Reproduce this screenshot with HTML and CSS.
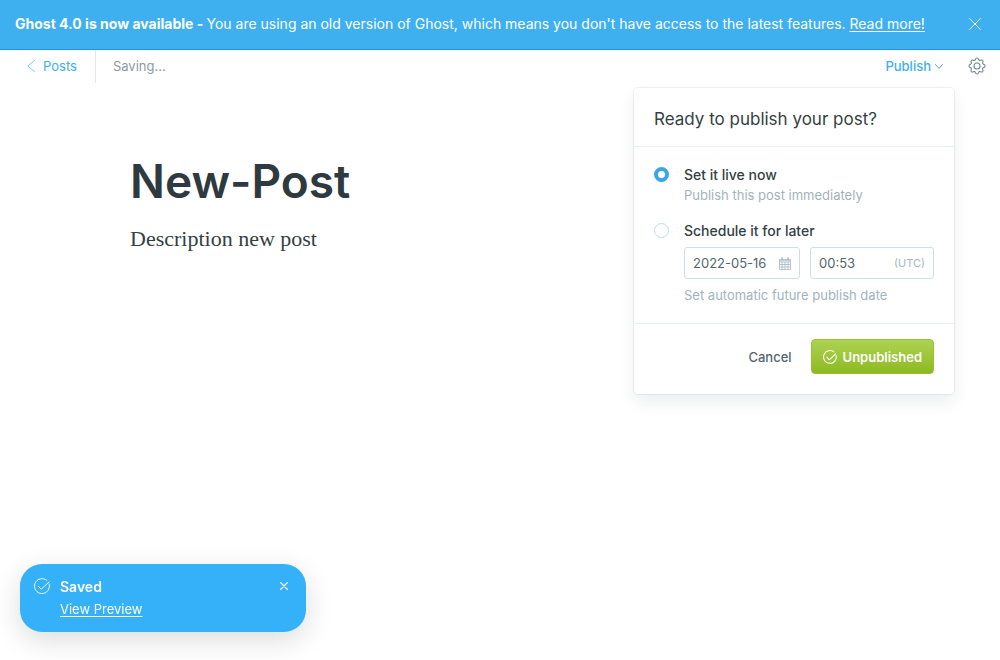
FILE: index.html
```html
<!DOCTYPE html>
<html lang="en">
<head>
<meta charset="utf-8">
<meta name="viewport" content="width=device-width, initial-scale=1">
<title>New-Post - Ghost</title>
<link rel="stylesheet" href="styles.css">
</head>
<body>
<div class="app">
  <aside class="upgrade">
    <p class="upgrade-text"><strong>Ghost 4.0 is now available - </strong>You are using an old version of Ghost, which means you don't have access to the latest features. <a class="upgrade-link" href="#">Read more!</a></p>
    <button class="icon-button" type="button" aria-label="Close">
      <svg width="12" height="12" viewBox="0 0 12 12" fill="none" stroke="currentColor" stroke-linecap="round"><path d="M.5.5l11 11M11.5.5l-11 11"/></svg>
    </button>
  </aside>

  <header class="toolbar">
    <a class="back" href="#">
      <svg width="8" height="12" viewBox="0 0 8 12" fill="none" stroke="currentColor" stroke-width=".7" stroke-linecap="round"><path d="M7.5.5L.8 6l6.7 5.5"/></svg>
      Posts
    </a>
    <span class="status">Saving...</span>
    <div class="publish">
      <button class="publish-trigger" type="button" aria-expanded="true">Publish
        <svg width="8" height="5" viewBox="0 0 8 5" fill="none" stroke="#5d8ca5" stroke-width=".9" stroke-linecap="round"><path d="M.5.5L4 4.4 7.500.5"/></svg>
      </button>
      <form class="menu">
        <h2 class="menu-title">Ready to publish your post?</h2>
        <div class="menu-body">
          <div class="option">
            <input class="radio" type="radio" name="when" id="now" checked>
            <div class="option-content">
              <label class="option-label" for="now">Set it live now</label>
              <p class="hint">Publish this post immediately</p>
            </div>
          </div>
          <div class="option">
            <input class="radio" type="radio" name="when" id="later">
            <div class="option-content">
              <label class="option-label" for="later">Schedule it for later</label>
              <div class="schedule">
                <div class="field field-date">
                  <input class="field-input" type="text" value="2022-05-16" aria-label="Date">
                  <svg class="calendar" width="12" height="13" viewBox="0 0 12 13" fill="none" stroke="currentColor" stroke-width=".8"><path d="M.5 2.500h11v10H.5zM.5 5h11M.5 7.500h11M.5 10h11M3 5v7.500M6 5v7.500M9 5v7.500M.5 3.700h11"/><path stroke-width="1.400" d="M3 .3v2.900M9 .3v2.900"/></svg>
                </div>
                <div class="field field-time">
                  <input class="field-input" type="text" value="00:53" aria-label="Time">
                  <span class="zone">(UTC)</span>
                </div>
              </div>
              <p class="hint">Set automatic future publish date</p>
            </div>
          </div>
        </div>
        <div class="menu-footer">
          <button class="cancel" type="button">Cancel</button>
          <button class="submit" type="button">
            <svg width="14" height="14" viewBox="0 0 16 16" fill="none" stroke="currentColor" stroke-width="1.200" stroke-linecap="round" stroke-linejoin="round"><path d="M15 6.200a7.300 7.300 0 1 1-2.600-4"/><path d="M4.300 8.200l3 3L14.300 4.300"/></svg>
            Unpublished
          </button>
        </div>
      </form>
    </div>
    <button class="icon-button settings" type="button" aria-label="Settings">
      <svg width="18" height="18" viewBox="0 0 18 18" fill="none" stroke="currentColor" stroke-width="1.100" stroke-linejoin="round"><path d="M7.400 2.300Q7.700 1 9 1T10.600 2.300Q11.200 4 12.600 3.300Q14 2.600 14.700 3.300T14.700 5.400Q14 6.800 15.700 7.400Q17 7.700 17 9T15.700 10.600Q14 11.200 14.700 12.600Q15.400 14 14.700 14.700T12.600 14.700Q11.200 14 10.600 15.700Q10.300 17 9 17T7.400 15.700Q6.800 14 5.400 14.700Q4 15.400 3.300 14.700T3.300 12.600Q4 11.200 2.300 10.600Q1 10.300 1 9T2.300 7.400Q4 6.800 3.300 5.400Q2.600 4 3.300 3.300T5.400 3.300Q6.800 4 7.400 2.300Z"/><circle cx="9" cy="9" r="3"/></svg>
    </button>
  </header>

  <main class="editor">
    <h1 class="post-title">New-Post</h1>
    <p class="post-text">Description new post</p>
  </main>

  <div class="toast" role="status">
    <svg class="toast-icon" width="16" height="16" viewBox="0 0 16 16" fill="none" stroke="currentColor" stroke-width=".9" stroke-linecap="round" stroke-linejoin="round"><path d="M15.200 6a7.500 7.500 0 1 1-2.400-3.700"/><path d="M4.300 8.200l3 3L15 4"/></svg>
    <div class="toast-content">
      <strong class="toast-title">Saved</strong>
      <a class="toast-link" href="#">View Preview</a>
    </div>
    <button class="icon-button toast-close" type="button" aria-label="Dismiss">
      <svg width="8" height="8" viewBox="0 0 8 8" fill="none" stroke="currentColor" stroke-width="1.200" stroke-linecap="round"><path d="M.5.5l7 7M7.500.5l-7 7"/></svg>
    </button>
  </div>
</div>
</body>
</html>
```

FILE: styles.css
```css
* {
  box-sizing: border-box;
}

body,
h1,
h2,
p {
  margin: 0;
}

body {
  background: #fff;
  color: #343f44;
  font: 13px/20px Inter, "Open Sans", sans-serif;
}

button,
input {
  font: inherit;
  color: inherit;
}

button {
  padding: 0;
  border: 0;
  background: none;
  cursor: pointer;
}

svg {
  display: block;
  flex: none;
}

.app {
  min-height: 100vh;
}

.upgrade {
  display: flex;
  align-items: center;
  justify-content: space-between;
  gap: 16px;
  min-height: 50px;
  padding: 0 19px 1px 15px;
  border-bottom: 1px solid #1e96de;
  background: #3eb0ef;
  color: #fff;
  font-size: 14px;
}

.upgrade-text strong {
  font-weight: 700;
}

.upgrade-link {
  color: inherit;
  text-underline-offset: 2px;
}

.icon-button {
  display: flex;
}

.toolbar {
  display: flex;
  align-items: center;
  height: 33px;
  padding: 0 14px 0 0;
}

.back {
  display: flex;
  align-items: center;
  align-self: stretch;
  gap: 8px;
  padding: 0 18px 1px 27px;
  border-right: 1px solid #dfe8ef;
  color: #3eb0ef;
  text-decoration: none;
}

.status {
  padding: 0 0 2px 17px;
  color: #8b9ba5;
}

.publish {
  position: relative;
  margin-left: auto;
  padding-bottom: 1px;
}

.publish-trigger {
  display: flex;
  align-items: center;
  gap: 4px;
  color: #3eb0ef;
  font-weight: 500;
}

.settings {
  margin-left: 25px;
  padding-bottom: 2px;
  color: #738a94;
}

.menu {
  position: absolute;
  top: 32px;
  right: -11px;
  width: 320px;
  border-radius: 4px;
  background: #fff;
  box-shadow: 0 0 0 1px rgba(99, 114, 130, 0.1), 0 8px 16px rgba(27, 39, 51, 0.08);
}

.menu-title {
  padding: 21px 20px 17px;
  border-bottom: 1px solid #e5eff5;
  font-size: 17px;
  line-height: 20px;
  font-weight: 400;
}

.menu-body {
  display: grid;
  gap: 16px;
  padding: 18px 20px;
}

.option {
  display: flex;
  gap: 15px;
}

.option-content {
  flex: 1;
  min-width: 0;
}

.radio {
  appearance: none;
  flex: none;
  width: 15px;
  height: 15px;
  margin: 2px 0 0;
  border: 1px solid #c5dbe8;
  border-radius: 50%;
  background: #fff;
}

.radio:checked {
  border: 4px solid #3aa6e8;
}

.option-label {
  display: block;
  font-size: 14px;
  font-weight: 500;
}

.hint {
  color: #a3b3bb;
}

.schedule {
  display: flex;
  gap: 10px;
  margin: 6px 0;
}

.field {
  display: flex;
  align-items: center;
  height: 32px;
  padding: 0 8px;
  border: 1px solid #cfdfe8;
  border-radius: 3px;
}

.field-date {
  flex: 0 0 116px;
}

.field-time {
  flex: 1;
}

.field-input {
  flex: 1;
  min-width: 0;
  width: 0;
  padding: 0;
  border: 0;
  outline: 0;
  background: none;
  color: #54666d;
}

.calendar,
.zone {
  color: #a8b7be;
}

.zone {
  font-size: 11px;
}

.menu-footer {
  display: flex;
  align-items: center;
  justify-content: flex-end;
  gap: 19px;
  padding: 15px 20px 20px;
  border-top: 1px solid #e5eff5;
}

.cancel {
  color: #54666d;
  font-weight: 500;
}

.submit {
  display: flex;
  align-items: center;
  gap: 6px;
  height: 35px;
  padding: 0 11px;
  border: 1px solid #99c22f;
  border-radius: 4px;
  background: linear-gradient(#acd352, #8eb922);
  color: #fff;
  font-weight: 600;
}

.editor {
  padding: 68px 130px;
}

.post-title {
  color: #2f3a40;
  font-size: 46px;
  line-height: 60px;
  font-weight: 600;
}

.post-text {
  margin-top: 14px;
  font: 22px/28px Georgia, "Liberation Serif", serif;
}

.toast {
  position: fixed;
  left: 20px;
  bottom: 28px;
  display: flex;
  align-items: flex-start;
  gap: 10px;
  width: 286px;
  padding: 12px 18px 12px 14px;
  border-radius: 22px;
  background: #35b1f9;
  box-shadow: 0 8px 28px rgba(0, 0, 0, 0.14);
  color: #fff;
}

.toast-icon {
  margin-top: 2px;
}

.toast-content {
  display: grid;
  flex: 1;
  justify-items: start;
  line-height: 22px;
}

.toast-title {
  font-size: 14px;
  font-weight: 600;
}

.toast-link {
  color: inherit;
  text-underline-offset: 2px;
}

.toast-close {
  margin-top: 6px;
}
```
